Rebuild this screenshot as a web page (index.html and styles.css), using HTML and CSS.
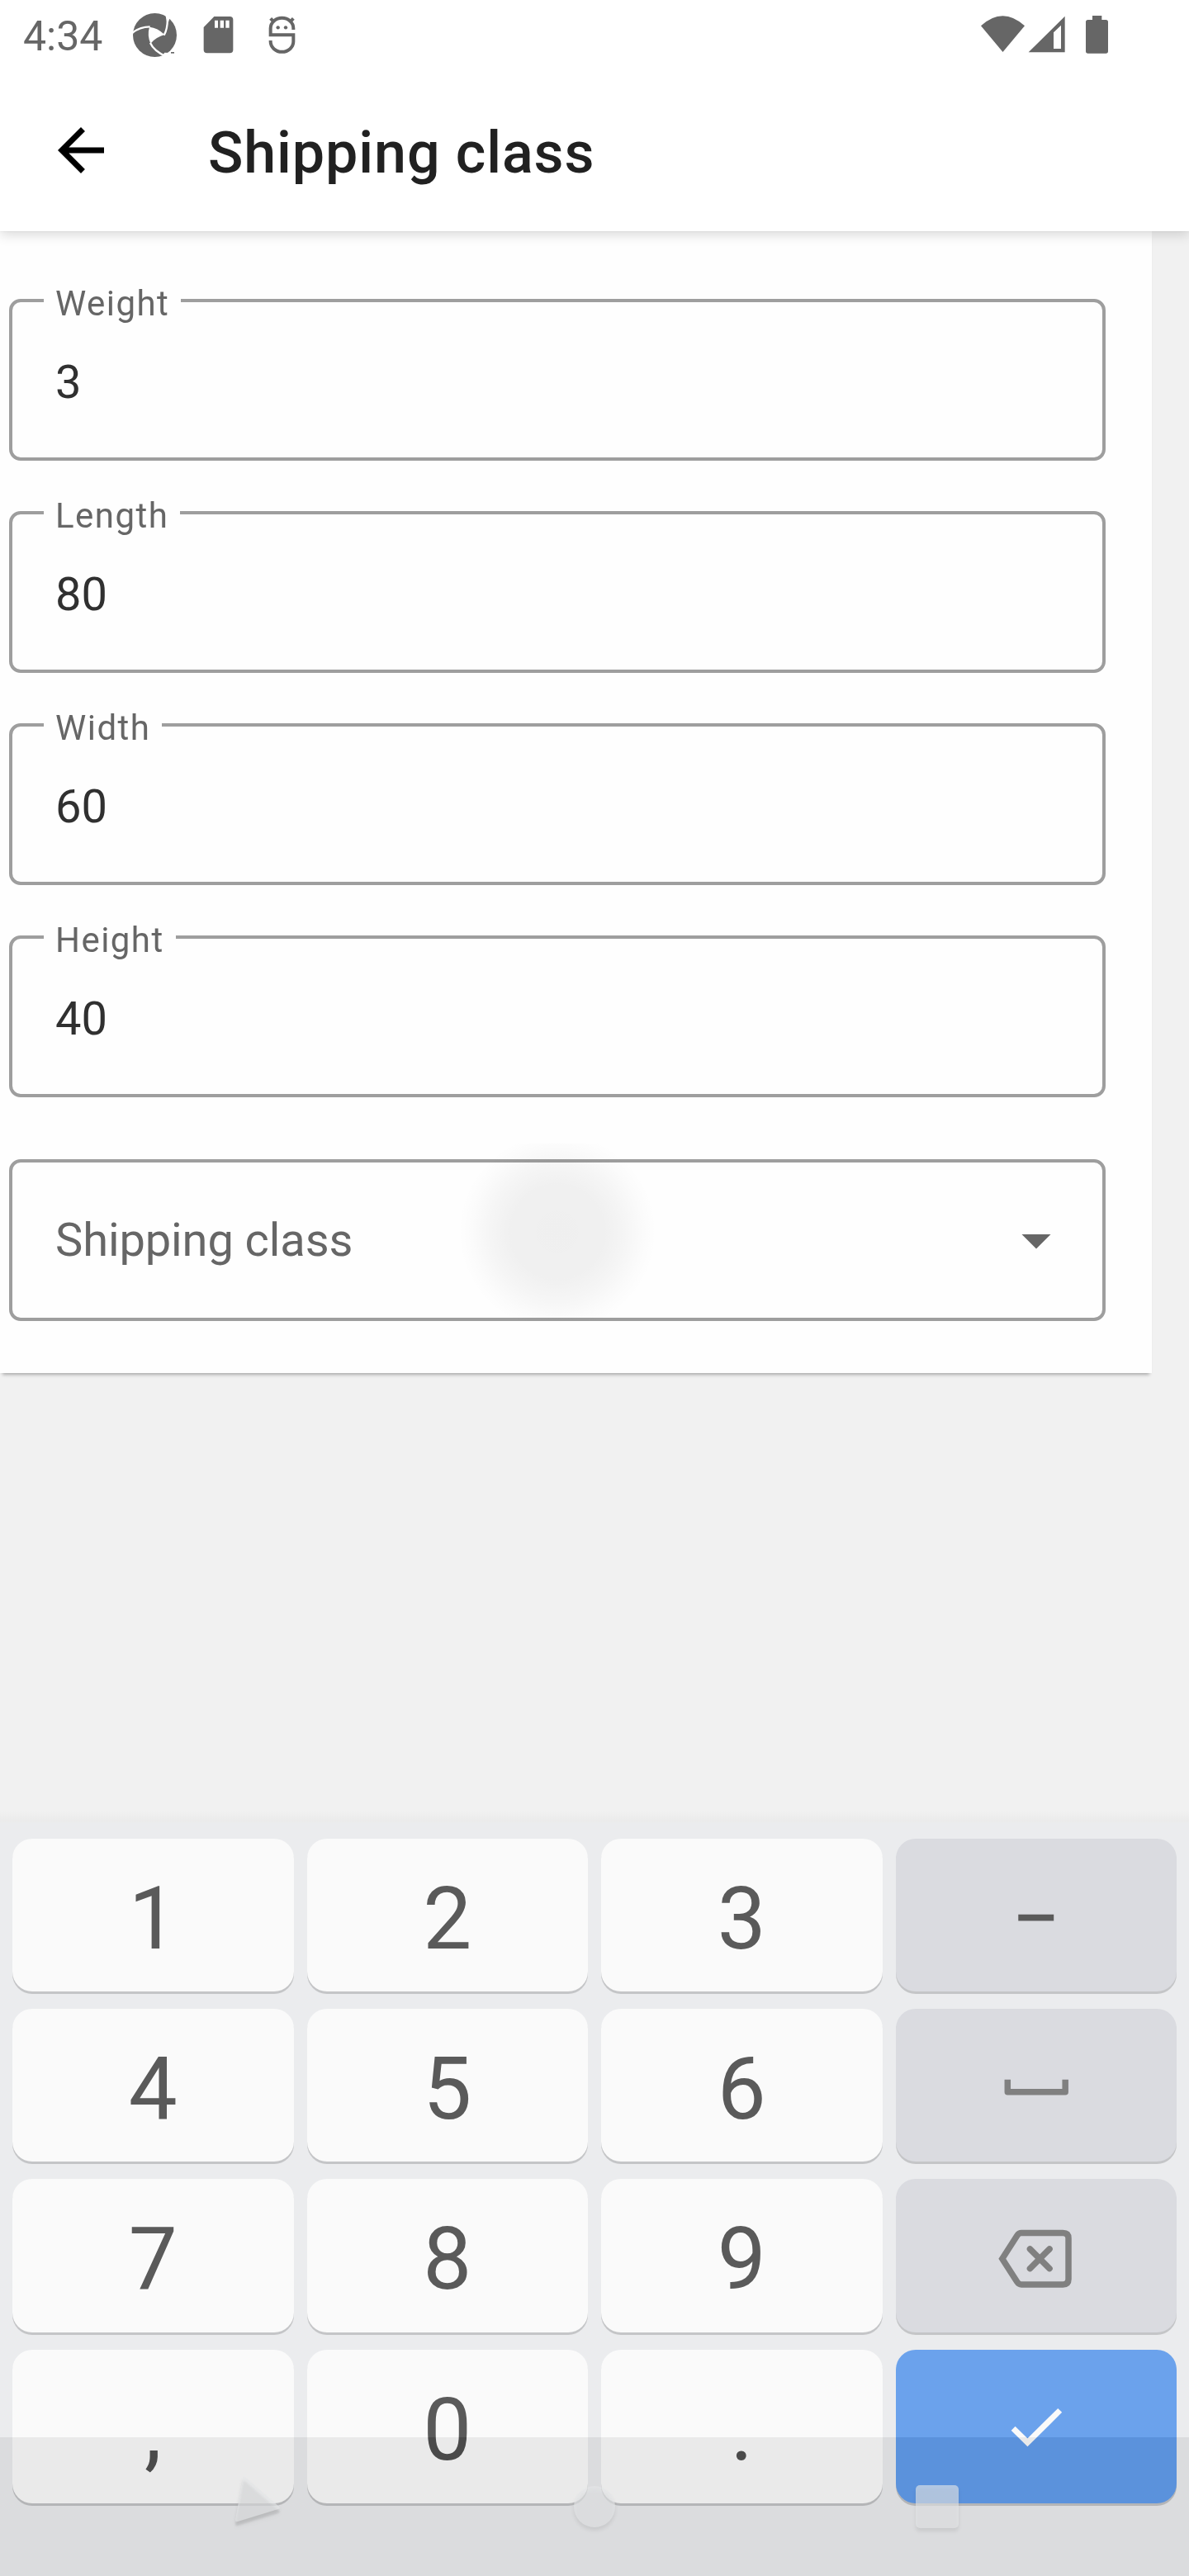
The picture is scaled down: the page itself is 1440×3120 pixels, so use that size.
FILE: index.html
```html
<!DOCTYPE html>
<html lang="en">
<head>
<meta charset="utf-8">
<title>Shipping class</title>
<link rel="stylesheet" href="styles.css">
</head>
<body>
<div class="screen">
  <header class="top">
    <div class="status">
      <span class="clock">4:34</span>
      <svg class="notifications" viewBox="483 0 597 252" width="199" height="84" fill="#666">
        <circle cx="562.5" cy="127.5" r="79.5"/>
        <path fill="#fff" d="M543 98Q573 101 598 126Q568 134 547 158Q534 128 543 98Z"/>
        <path fill="none" stroke="#fff" stroke-width="7" d="M478 122Q504 98 545 97M596 128Q613 98 607 44M546 156Q558 184 604 206"/>
        <path fill="#fff" d="M600 50L618 60L612 80L606 78ZM584 212L598 191L616 192L606 212Z"/>
        <path d="M621 189h12v5h-12z"/>
        <path d="M835 60H778L740 99V181Q740 193 752 193H835Q847 193 847 181V72Q847 60 835 60ZM792 101H780V74H792ZM813 101H800V74H813ZM833 101H820V74H833Z"/>
        <path fill="none" stroke="#666" stroke-width="12" d="M1066 108V103A41 37 0 0 0 983 103V127H1066V151A41 37 0 0 1 983 151V147M983 67L995 79M1066 67L1054 79"/>
        <circle cx="1010" cy="100" r="6.5"/><circle cx="1038" cy="100" r="6.5"/>
      </svg>
      <svg class="signals" viewBox="84 0 462 252" width="154" height="84" fill="#666">
        <path d="M84 94Q163 22 243 94L163.500 189Z"/>
        <path fill-rule="evenodd" d="M257 190L389 59V190ZM348 118V177H375V92Z"/>
        <path d="M489 57H523V72H538Q546 72 546 80V186Q546 194 538 194H473Q465 194 465 186V80Q465 72 473 72H489Z"/>
      </svg>
    </div>
    <div class="appbar">
      <svg class="back" viewBox="0 0 24 24" width="84" height="84"><path d="M20 11H7.830l5.590-5.590L12 4l-8 8 8 8 1.410-1.410L7.830 13H20v-2z"/></svg>
      <h1 class="title">Shipping class</h1>
    </div>
  </header>

  <main class="card">
    <div class="field"><label class="label">Weight</label><span class="value">3</span></div>
    <div class="field"><label class="label">Length</label><span class="value">80</span></div>
    <div class="field"><label class="label">Width</label><span class="value">60</span></div>
    <div class="field"><label class="label">Height</label><span class="value">40</span></div>
    <div class="field select">
      <span class="hint">Shipping class</span>
      <svg viewBox="0 0 24 24" width="84" height="84" fill="#666"><path d="M7 10l5 5 5-5z"/></svg>
      <span class="ripple"></span>
    </div>
  </main>

  <section class="keyboard">
    <div class="key">1</div><div class="key">2</div><div class="key">3</div><div class="key alt"><svg viewBox="132 141 1023 555"><path fill="#5a5a5a" d="M577.500 416.500h129v23h-129z"/></svg></div>
    <div class="key">4</div><div class="key">5</div><div class="key">6</div>
    <div class="key alt"><svg viewBox="132 759 1023 555"><path class="line" stroke-linejoin="round" d="M538.500 1016V1061H748.500V1016"/></svg></div>
    <div class="key">7</div><div class="key">8</div><div class="key">9</div>
    <div class="key alt"><svg viewBox="132 57 1023 558"><path class="line" d="M519 347L573 263Q579 253.500 589 253.500H740Q760 253.500 760 273V421Q760 441 740 441H589Q579 441 573 431Z"/><path class="line" stroke-linecap="round" d="M620 312L691 383M691 312L620 383"/></svg></div>
    <div class="key">,</div><div class="key">0</div><div class="key">.</div>
    <div class="key enter"><svg viewBox="132 678 1023 558"><path fill="none" stroke="#fafafa" stroke-width="21" d="M559 964L611 1015L729 898"/></svg></div>
  </section>

  <div class="navshade"></div>
  <svg class="nav" viewBox="0 2952 1440 168" width="1440" height="168">
    <path class="nav-back" d="M298 3001L338 3036Q340 3038 337 3039L288 3054Q285 3055 285 3052L294 3001Q295 2998 298 3001Z"/>
    <circle cx="720" cy="3036" r="25"/>
    <rect x="1109" y="3010" width="52" height="52" rx="5"/>
  </svg>
</div>
</body>
</html>
```
FILE: styles.css
```css
body {
  margin: 0;
  font-family: Roboto, "Liberation Sans", sans-serif;
}

.screen {
  position: relative;
  display: flex;
  flex-direction: column;
  width: 1440px;
  height: 3120px;
  overflow: hidden;
  background: #f1f1f1;
}

/* Status bar and app bar */
.top {
  position: relative;
  z-index: 1;
  height: 280px;
  background: #fff;
  box-shadow: 0 4px 14px rgba(0, 0, 0, 0.15), 0 0 2px rgba(0, 0, 0, 0.08);
}

.status {
  display: flex;
  height: 84px;
  padding: 0 98px 0 28px;
}

.clock {
  width: 133px;
  font-size: 50px;
  line-height: 88px;
  color: #666;
}

.signals {
  margin-left: auto;
}

.appbar {
  display: flex;
  align-items: center;
  height: 196px;
  padding-left: 56px;
}

.back {
  margin-right: 112px;
}

.title {
  margin: 5px 0 0;
  font-size: 70px;
  font-weight: 500;
  line-height: 82px;
  letter-spacing: 0.9px;
  color: #212121;
}

/* Form card */
.card {
  display: flex;
  flex-direction: column;
  gap: 61px;
  box-sizing: border-box;
  width: 1394.5px;
  height: 1383px;
  padding: 82px 55.5px 0 11px;
  background: #fefefe;
  box-shadow: 0 5px 4px -3px rgba(0, 0, 0, 0.3);
}

.field {
  position: relative;
  display: flex;
  align-items: center;
  box-sizing: border-box;
  height: 196px;
  padding: 6px 38px 0 52px;
  border: 4px solid #9e9e9e;
  border-radius: 14px;
}

.label {
  position: absolute;
  top: -19px;
  left: 38px;
  padding: 0 14px;
  background: #fefefe;
  font-size: 42px;
  line-height: 42px;
  letter-spacing: 1.45px;
  color: #666;
}

.value {
  font-size: 56px;
  line-height: 56px;
  color: #303030;
}

.select {
  justify-content: space-between;
  margin-top: 14px;
  padding-top: 0;
}

.hint {
  font-size: 56px;
  line-height: 56px;
  letter-spacing: -0.1px;
  color: #666;
}

.ripple {
  position: absolute;
  top: -23px;
  left: 540px;
  width: 240px;
  height: 215px;
  background: radial-gradient(circle 120px at 120px 107px, rgba(0, 0, 0, 0.057) 0, rgba(0, 0, 0, 0.053) 48%, rgba(0, 0, 0, 0.036) 68%, rgba(0, 0, 0, 0.012) 87%, transparent 100%);
}

/* Numeric keyboard */
.keyboard {
  display: grid;
  grid-template-columns: repeat(4, 1fr);
  grid-template-rows: 185px 185px 186px 186px;
  row-gap: 21px;
  column-gap: 16px;
  box-sizing: border-box;
  height: 926px;
  margin-top: auto;
  padding: 33px 15px 0;
  background: linear-gradient(#f1f1f1, #ebebeb 12px, #ebecee 14px);
}

.key {
  display: flex;
  justify-content: center;
  box-sizing: border-box;
  padding-top: 5px;
  border-radius: 24px;
  background: #fafafa;
  box-shadow: 0 3px #c4c5c7;
  font-size: 105px;
  line-height: 185px;
  color: #5a5a5a;
}

.alt,
.enter {
  padding: 0;
  background: #dadbe0;
}

.enter {
  background: #6ba2ec;
}

.key svg {
  width: 100%;
  height: 100%;
}

.line {
  fill: none;
  stroke: #808080;
  stroke-width: 22.5;
}

/* System navigation, drawn over the keyboard */
.navshade,
.nav {
  position: absolute;
  left: 0;
  bottom: 0;
  width: 1440px;
  height: 168px;
}

.navshade {
  background: #101010;
  mix-blend-mode: difference;
}

.nav {
  fill: rgba(228, 229, 231, 0.63);
  filter: drop-shadow(0 4px 2px rgba(0, 0, 0, 0.12));
}

.nav-back {
  filter: drop-shadow(0 5px 1px rgba(0, 0, 0, 0.12));
}
```
